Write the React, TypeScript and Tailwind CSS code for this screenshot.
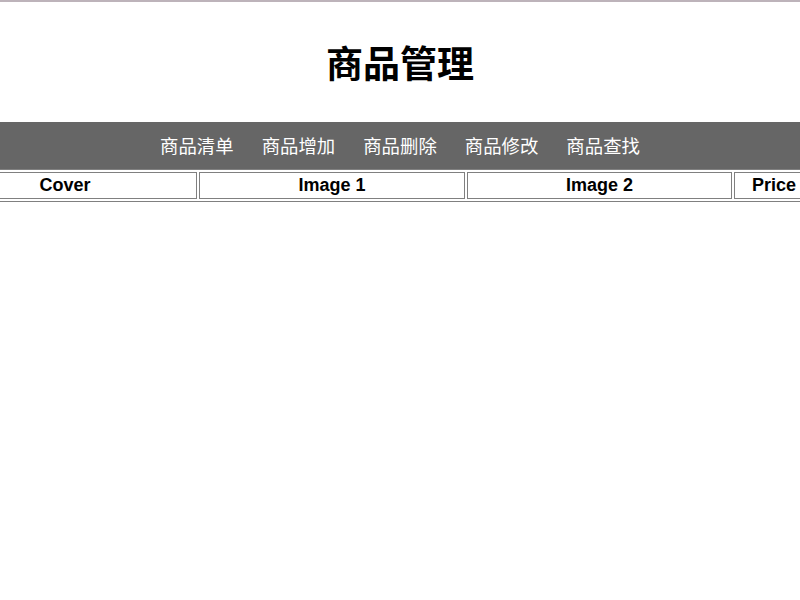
import React from 'react';

const navItems = ['商品清单', '商品增加', '商品删除', '商品修改', '商品查找'];

const columns = [
  { label: 'Cover', width: 'w-[264px]' },
  { label: 'Image 1', width: 'w-[266px]' },
  { label: 'Image 2', width: 'w-[265px]' },
  { label: 'Price', width: 'w-[80px]' },
  { label: 'Stock', width: 'w-[80px]' },
];

export default function App() {
  return (
    <div className="min-h-screen bg-white font-['Liberation_Sans','Noto_Sans_CJK_SC',sans-serif] border-t-2 border-[#bdb3ba]">
      <header className="h-[120px] flex items-center justify-center pt-[6px]">
        <h1 className="text-[37px] font-bold text-black leading-none">商品管理</h1>
      </header>

      <nav className="h-[47px] bg-[#666666] flex items-center justify-center gap-[28px] pt-[3px] text-white text-[18.4px]">
        {navItems.map((item) => (
          <a key={item} href="#" className="leading-none">
            {item}
          </a>
        ))}
      </nav>

      <div className="overflow-hidden">
        <div className="-ml-[70px] w-max flex gap-[2px] p-[2px] border border-[#808080]">
          {columns.map((col) => (
            <div
              key={col.label}
              className={`${col.width} shrink-0 h-[27px] flex items-center justify-center border border-[#808080] text-[18px] font-bold text-black`}
            >
              {col.label}
            </div>
          ))}
        </div>
      </div>
    </div>
  );
}
